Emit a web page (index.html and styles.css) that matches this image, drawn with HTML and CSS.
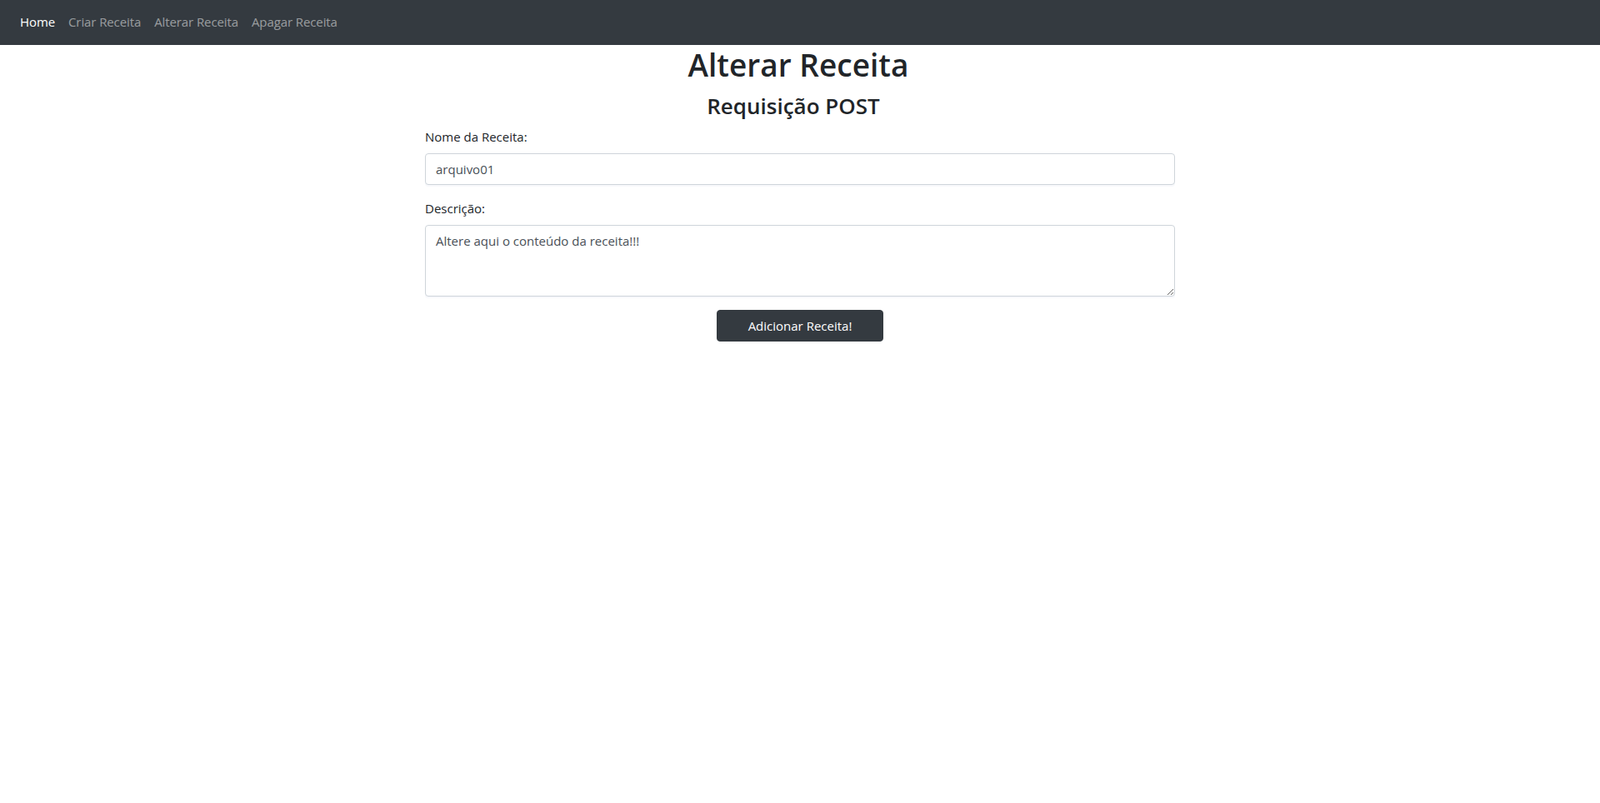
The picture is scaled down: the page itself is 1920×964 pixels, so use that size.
FILE: index.html
```html
<!DOCTYPE html>
<html lang="pt-BR">
<head>
<meta charset="utf-8">
<title>Alterar Receita</title>
<link rel="stylesheet" href="styles.css">
</head>
<body>
<nav class="navbar">
  <a class="nav-link active" href="#">Home</a>
  <a class="nav-link" href="#">Criar Receita</a>
  <a class="nav-link" href="#">Alterar Receita</a>
  <a class="nav-link" href="#">Apagar Receita</a>
</nav>
<main class="container">
  <h1 class="title">Alterar Receita</h1>
  <h3 class="subtitle">Requisição POST</h3>
  <form class="form">
    <div class="form-group">
      <label class="label" for="nome">Nome da Receita:</label>
      <input class="control" id="nome" type="text" value="arquivo01">
    </div>
    <div class="form-group">
      <label class="label" for="desc">Descrição:</label>
      <textarea class="control textarea" id="desc" rows="3">Altere aqui o conteúdo da receita!!!</textarea>
    </div>
    <div class="actions">
      <button class="btn" type="button">Adicionar Receita!</button>
    </div>
  </form>
</main>
</body>
</html>
```
FILE: styles.css
```css
* { box-sizing: border-box; }
html, body { margin: 0; padding: 0; }
body {
  font-family: "Open Sans", "Noto Sans", sans-serif;
  font-size: 16px;
  line-height: 1.5;
  color: #212529;
  background: #fff;
}
.navbar {
  display: flex;
  align-items: center;
  height: 54px;
  padding: 0 16px 2px;
  background: #343a40;
}
.nav-link {
  padding: 0 8px;
  color: rgba(255,255,255,0.5);
  text-decoration: none;
  font-size: 15px;
  letter-spacing: -0.1px;
}
.nav-link.active { color: #fff; }
.container {
  width: 900px;
  margin: 0 auto;
}
.title {
  margin: 0 0 8px;
  font-size: 37px;
  line-height: 48px;
  font-weight: 600;
  text-align: center;
  padding-right: 4px;
}
.subtitle {
  margin: 0 0 8px;
  font-size: 26px;
  line-height: 34px;
  font-weight: 600;
  text-align: center;
  padding-right: 16px;
}
.form-group { margin-bottom: 16px; }
.label {
  display: block;
  margin-bottom: 8px;
  font-size: 15px;
  line-height: 24px;
}
.control {
  display: block;
  width: 100%;
  height: 38px;
  padding: 6px 12px;
  font-family: inherit;
  font-size: 15px;
  line-height: 24px;
  color: #495057;
  background: #fff;
  border: 1px solid #ced4da;
  border-radius: 4px;
  box-shadow: 0 2px 1px rgba(200, 210, 230, 0.15);
}
.textarea {
  height: 86px;
  resize: vertical;
}
.actions {
  display: flex;
  justify-content: center;
}
.btn {
  width: 200px;
  height: 38px;
  font-family: inherit;
  font-size: 15px;
  line-height: 24px;
  color: #fff;
  background: #343a40;
  border: 1px solid #343a40;
  border-radius: 4px;
  cursor: pointer;
}
```
